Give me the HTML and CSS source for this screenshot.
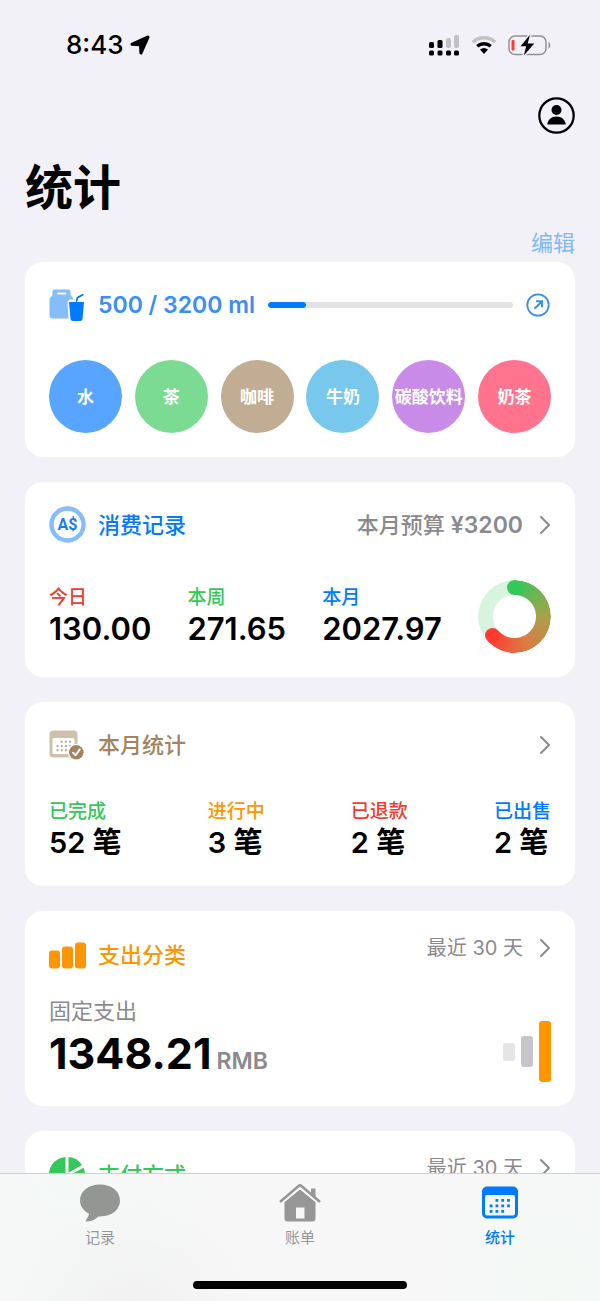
FILE: index.html
```html
<!DOCTYPE html>
<html lang="zh-CN">
<head>
<meta charset="utf-8">
<meta name="viewport" content="width=device-width, initial-scale=1">
<title>统计</title>
<link rel="stylesheet" href="styles.css">
</head>
<body>
<div class="app">
  <div class="screen">
    <div class="status-bar">
      <div class="status-time">
        <time>8:43</time>
        <svg width="20" height="20" viewBox="0 0 20 20" aria-hidden="true"><path d="M18 1.500 1.500 8.800 1.700 9.800 10 10.200 10.400 18.300 11.300 18.500 18.600 2.100Z" stroke="#000" stroke-width="2" stroke-linejoin="round"/></svg>
      </div>
      <div class="status-icons">
        <svg width="31" height="22" viewBox="0 0 31 22" aria-hidden="true">
          <g fill="#c1c1c5"><rect x="17" y="4" width="5" height="10" rx="2"/><rect x="25" y="1" width="5" height="13" rx="2"/></g>
          <rect x="0" y="8" width="5" height="6" rx="1.500"/><rect x="8.500" y="6" width="5" height="8" rx="1.500"/>
          <rect x="0" y="16.500" width="5" height="5" rx="1.500"/><rect x="8.500" y="16.500" width="5" height="5" rx="1.500"/><rect x="17" y="16.500" width="5" height="5" rx="1.500"/><rect x="25" y="16.500" width="5" height="5" rx="1.500"/>
        </svg>
        <svg width="26" height="20" viewBox="0 0 26 20" fill="none" aria-hidden="true">
          <path d="M1.800 7.200a16.500 16.500 0 0 1 22.400 0" stroke="#c1c1c5" stroke-width="3.600"/>
          <path d="M6.200 11.300a10.200 10.200 0 0 1 13.600 0" stroke="#000" stroke-width="3.400"/>
          <path d="M9 14.600a6.200 6.200 0 0 1 8 0l-4 4.300Z" fill="#000"/>
        </svg>
        <svg width="43" height="22" viewBox="0 0 43 22" aria-hidden="true">
          <rect x="1" y="2" width="37" height="18.500" rx="6" fill="none" stroke="#919195" stroke-width="1.500"/>
          <path d="M40.500 8v6.500c2.400-1.200 2.400-5.300 0-6.500Z" fill="#919195"/>
          <rect x="3.500" y="6" width="3" height="10.500" rx="1" fill="#ff3b30"/>
          <path d="M22 .8 12.500 12.300h5.700l-2.400 9.200L26.300 9.500h-6.600Z" fill="#000" stroke="#f2f1f8" stroke-width="3" paint-order="stroke" stroke-linejoin="round"/>
        </svg>
      </div>
    </div>

    <header class="page-head">
      <button class="icon-button profile" type="button" aria-label="账户">
        <svg width="37" height="37" viewBox="0 0 37 37" aria-hidden="true"><circle cx="18.500" cy="18.500" r="17.200" fill="none" stroke="#000" stroke-width="2.300"/><circle cx="18.500" cy="13" r="5"/><path d="M9.300 27.500c.3-4.700 4.200-8 9.200-8s8.900 3.300 9.200 8Z"/></svg>
      </button>
      <h1 class="page-title">统计</h1>
      <button class="edit" type="button">编辑</button>
    </header>

    <main class="cards">
      <section class="card">
        <div class="card-head">
          <span class="card-icon"><svg width="36" height="34" viewBox="0 0 36 34" aria-hidden="true">
            <path d="M5.500 1.500h14a2 2 0 0 1 2 2v3.500l3.500 4.500h-3.500a3 3 0 0 0-3 3.500L19.500 30.500H3.500a3 3 0 0 1-3-3v-16c0-2.500 3-3 3-5V3.500a2 2 0 0 1 2-2Z" fill="#85bcfa"/>
            <path d="M9 5.500h7.500" stroke="#fff" stroke-width="2" stroke-linecap="round"/>
            <path d="M20 14h15l-1.500 17a2.500 2.500 0 0 1-2.500 2H24a2.500 2.500 0 0 1-2.500-2Z" fill="#007aff"/>
            <path d="m27.500 13 1-3.300 5.200-2.900" fill="none" stroke="#007aff" stroke-width="1.800" stroke-linecap="round"/>
          </svg></span>
          <label class="intake" for="water">500 / 3200 ml</label>
          <progress class="meter" id="water" max="3200" value="500"></progress>
          <button class="icon-button" type="button" aria-label="打开">
            <svg width="26" height="26" viewBox="0 0 26 26" fill="none" stroke="#3a8df5" stroke-width="1.800" aria-hidden="true"><circle cx="13" cy="13" r="10.700"/><path d="m9.500 16.800 7.300-7.300M11 9.200h6v6" stroke-width="2"/></svg>
          </button>
        </div>
        <div class="drinks">
          <button class="drink water" type="button">水</button>
          <button class="drink tea" type="button">茶</button>
          <button class="drink coffee" type="button">咖啡</button>
          <button class="drink milk" type="button">牛奶</button>
          <button class="drink soda" type="button">碳酸饮料</button>
          <button class="drink milk-tea" type="button">奶茶</button>
        </div>
      </section>

      <section class="card">
        <div class="card-head">
          <span class="card-icon"><svg width="37" height="37" viewBox="0 0 37 37" aria-hidden="true"><circle cx="18.500" cy="18.500" r="16" fill="none" stroke="#85bcfa" stroke-width="4.400"/><text class="coin-text" x="18.500" y="24" text-anchor="middle">A$</text></svg></span>
          <h2 class="card-title blue">消费记录</h2>
          <a class="more strong" href="#spending"><span>本月预算 <b class="budget">¥3200</b></span>
            <svg class="chevron" width="12" height="20" viewBox="0 0 12 20" aria-hidden="true"><path d="m2 2 8 8-8 8"/></svg>
          </a>
        </div>
        <div class="stats">
          <dl class="stat"><dt class="red">今日</dt><dd>130.00</dd></dl>
          <dl class="stat"><dt class="green">本周</dt><dd>271.65</dd></dl>
          <dl class="stat"><dt class="blue">本月</dt><dd>2027.97</dd></dl>
          <div class="donut" role="img" aria-label="预算使用 63%"></div>
        </div>
      </section>

      <section class="card">
        <div class="card-head">
          <span class="card-icon"><svg width="36" height="32" viewBox="0 0 36 32" aria-hidden="true">
            <path fill-rule="evenodd" d="M4.500 1.500h20a4 4 0 0 1 4 4v19a4 4 0 0 1-4 4h-20a4 4 0 0 1-4-4v-19a4 4 0 0 1 4-4ZM5 9a1.500 1.500 0 0 0-1.500 1.500v13A1.500 1.500 0 0 0 5 25h19a1.500 1.500 0 0 0 1.500-1.500v-13A1.500 1.500 0 0 0 24 9Z" fill="#d0c0ab"/>
            <path d="M11.500 12.700h11M7.500 17h15M7.500 21.300h11" stroke="#bda88d" stroke-width="2" stroke-dasharray="2 2.300"/>
            <circle cx="27.300" cy="23.300" r="8.500" fill="#fff"/><circle cx="27.300" cy="23.300" r="7.300" fill="#a2845e"/>
            <path d="m24 23.700 2.500 2.700 4.300-6" fill="none" stroke="#fff" stroke-width="1.900" stroke-linecap="round" stroke-linejoin="round"/>
          </svg></span>
          <h2 class="card-title brown">本月统计</h2>
          <a class="more" href="#month" aria-label="本月统计">
            <svg class="chevron" width="12" height="20" viewBox="0 0 12 20" aria-hidden="true"><path d="m2 2 8 8-8 8"/></svg>
          </a>
        </div>
        <div class="stats counts">
          <dl class="stat"><dt class="green">已完成</dt><dd>52 笔</dd></dl>
          <dl class="stat"><dt class="orange">进行中</dt><dd>3 笔</dd></dl>
          <dl class="stat"><dt class="red">已退款</dt><dd>2 笔</dd></dl>
          <dl class="stat"><dt class="blue">已出售</dt><dd>2 笔</dd></dl>
        </div>
      </section>

      <section class="card category">
        <div class="card-head">
          <span class="card-icon"><svg width="37" height="27" viewBox="0 0 37 27" fill="#ff9500" aria-hidden="true"><rect y="8.500" width="11" height="18" rx="3"/><rect x="13" y="4.500" width="11" height="22" rx="3"/><rect x="26" y=".5" width="11" height="26" rx="3"/></svg></span>
          <h2 class="card-title orange">支出分类</h2>
          <a class="more" href="#category">最近 30 天
            <svg class="chevron" width="12" height="20" viewBox="0 0 12 20" aria-hidden="true"><path d="m2 2 8 8-8 8"/></svg>
          </a>
        </div>
        <div class="category-body">
          <div>
            <p class="category-name">固定支出</p>
            <p class="amount">1348.21<span class="currency">RMB</span></p>
          </div>
          <div class="bars" aria-hidden="true">
            <span class="bar light" style="height: 18px"></span>
            <span class="bar mid" style="height: 31px"></span>
            <span class="bar full" style="height: 61px"></span>
          </div>
        </div>
      </section>

      <section class="card category">
        <div class="card-head">
          <span class="card-icon"><svg width="37" height="38" viewBox="0 0 37 38" fill="#34c759" aria-hidden="true"><path d="M16.500 1v18.500l9.500 15.500A18 18 0 1 1 16.500 1Z"/><path d="M19.500 1A18 18 0 0 1 33 9L19.500 16.700Z"/><path d="M34.500 11.700A18 18 0 0 1 28.500 33.500L20 19.500Z"/></svg></span>
          <h2 class="card-title green">支付方式</h2>
          <a class="more" href="#payment">最近 30 天
            <svg class="chevron" width="12" height="20" viewBox="0 0 12 20" aria-hidden="true"><path d="m2 2 8 8-8 8"/></svg>
          </a>
        </div>
      </section>
    </main>
  </div>

  <footer class="tab-bar">
    <nav class="tabs">
      <a class="tab" href="#records">
        <svg width="42" height="40" viewBox="0 0 42 40" aria-hidden="true"><path d="M21 1.500C9.700 1.500 1 8.200 1 17.500c0 5.700 3.600 10.500 9 13.200-.2 2.200-1.500 4.200-2.700 5.700-1 1.200-.3 2.200 1.200 2.100 4.800-.3 8.200-2.600 11-5.100C32.300 34 41 27 41 17.500 41 8.200 32.300 1.500 21 1.500Z" fill="#939693"/></svg>
        记录
      </a>
      <a class="tab" href="#bills">
        <svg width="42" height="40" viewBox="0 0 42 40" fill="#969696" aria-hidden="true"><path d="M21 6.500 36.500 19v16.500a3 3 0 0 1-3 3h-25a3 3 0 0 1-3-3V19Z"/><path d="M17 24.500h8.500v11H17Z" fill="#f7f7f7"/><path d="M1.500 18.500 19.400 3.200a2.500 2.500 0 0 1 3.200 0l17.900 15.300" fill="none" stroke="#f7f7f7" stroke-width="6"/><path d="M32 5.500h4.500v11L32 12.500Z"/><path d="M1.800 18.200 19.300 3.200a2.600 2.600 0 0 1 3.400 0l17.500 15" fill="none" stroke="#969696" stroke-width="2.600" stroke-linecap="round"/></svg>
        账单
      </a>
      <a class="tab active" href="#stats" aria-current="page">
        <svg width="42" height="40" viewBox="0 0 42 40" aria-hidden="true"><path fill-rule="evenodd" d="M8 3.500h26a5 5 0 0 1 5 5v22a5 5 0 0 1-5 5H8a5 5 0 0 1-5-5v-22a5 5 0 0 1 5-5ZM8 12a2 2 0 0 0-2 2v16.500a2 2 0 0 0 2 2h26a2 2 0 0 0 2-2V14a2 2 0 0 0-2-2Z" fill="#007aff"/><path d="M16.500 17.300h15M10.700 22.800h20.800M10.700 28.300h15" stroke="#007aff" stroke-width="2.800" stroke-dasharray="2.800 3"/></svg>
        统计
      </a>
    </nav>
    <div class="home-indicator"></div>
  </footer>
</div>
</body>
</html>
```
FILE: styles.css
```css
* {
  box-sizing: border-box;
}

body {
  margin: 0;
  background: #f2f1f8;
  color: #000;
  font-family: Inter, "Noto Sans CJK SC", sans-serif;
}

h1,
h2,
p,
dl,
dd {
  margin: 0;
}

button {
  padding: 0;
  border: 0;
  background: none;
  font: inherit;
}

a {
  text-decoration: none;
}

svg {
  display: block;
  flex: none;
}

.app {
  display: flex;
  flex-direction: column;
  height: 100vh;
}

.screen {
  flex: 1;
  min-height: 0;
  overflow-y: auto;
  scrollbar-width: none;
}

/* Status bar */
.status-bar {
  display: flex;
  justify-content: space-between;
  align-items: center;
  height: 90px;
  padding: 0 49px 0 66px;
}

.status-time,
.status-icons {
  display: flex;
  align-items: center;
}

.status-time {
  gap: 6px;
  font-size: 26px;
  font-weight: 500;
  line-height: 32px;
}

.status-icons {
  gap: 11px;
}

/* Page heading */
.page-head {
  display: flex;
  flex-direction: column;
  padding: 7px 25px 5px;
}

.profile,
.edit {
  align-self: flex-end;
}

.page-title {
  margin: 18px 0 5px;
  font-size: 48px;
  font-weight: 700;
  line-height: 72px;
}

.edit {
  color: #7fb8f6;
  font-size: 22px;
  line-height: 28px;
}

.icon-button {
  display: block;
}

/* Cards */
.cards {
  display: flex;
  flex-direction: column;
  gap: 25px;
  padding: 0 25px 25px;
}

.card {
  display: flex;
  flex-direction: column;
  gap: 37px;
  padding: 24px;
  border-radius: 18px;
  background: #fff;
}

.card-head {
  display: flex;
  align-items: center;
  height: 37px;
}

.card-icon {
  flex: none;
  width: 49px;
}

.card-title {
  font-size: 22px;
  font-weight: 500;
  line-height: 32px;
}

.blue { color: #007aff; }
.red { color: #f23b31; }
.green { color: #34c759; }
.orange { color: #ff9500; }
.brown { color: #a2845e; }

.intake {
  color: #3a8df5;
  font-size: 23px;
  font-weight: 600;
  line-height: 32px;
}

.meter {
  flex: 1;
  min-width: 0;
  height: 6px;
  margin: 0 12px 0 13px;
  border: 0;
  border-radius: 3px;
  overflow: hidden;
  appearance: none;
  background: #e3e3e6;
}

.meter::-webkit-progress-bar {
  background: #e3e3e6;
}

.meter::-webkit-progress-value {
  border-radius: 3px;
  background: #007aff;
}

.more {
  display: flex;
  align-items: center;
  gap: 16px;
  margin-left: auto;
  color: #8a8a8e;
  font-size: 20px;
  line-height: 26px;
}

.more.strong {
  font-size: 22px;
  font-weight: 500;
}

.budget {
  font-size: 23px;
  font-weight: 600;
}

.chevron {
  fill: none;
  stroke: #8a8a8e;
  stroke-width: 2;
  stroke-linecap: round;
  stroke-linejoin: round;
}

.coin-text {
  fill: #1a7cf0;
  font-family: Roboto, sans-serif;
  font-size: 16px;
  font-weight: 700;
}

/* Drinks */
.drinks {
  display: flex;
  justify-content: space-between;
}

.drink {
  width: 73px;
  height: 73px;
  border-radius: 50%;
  color: #fff;
  font-size: 17px;
  font-weight: 700;
  line-height: 24px;
  white-space: nowrap;
}

.water { background: #57a5ff; }
.tea { background: #7bdb93; }
.coffee { background: #c0ad94; }
.milk { background: #77c8ec; }
.soda { background: #c88ce8; }
.milk-tea { background: #ff738e; }

/* Figures */
.stats {
  display: flex;
  justify-content: space-between;
  align-items: center;
}

.stat dt {
  font-size: 19px;
  font-weight: 500;
  line-height: 24px;
}

.stat dd {
  font-size: 31px;
  font-weight: 600;
  line-height: 38px;
}

.counts dd {
  font-size: 29px;
}

.donut {
  position: relative;
  width: 73px;
  height: 73px;
  border-radius: 50%;
  background: conic-gradient(#34c759, #a8a04c 90deg, #dc7a42 160deg, #ff3b30 228deg, #d6f4de 228deg);
  mask: radial-gradient(circle, transparent 21px, #000 22px);
}

.donut::before,
.donut::after {
  content: "";
  position: absolute;
  width: 15px;
  height: 15px;
  border-radius: 50%;
}

.donut::before {
  top: 0;
  left: 29px;
  background: #34c759;
}

.donut::after {
  top: 48px;
  left: 7px;
  background: #ff3b30;
}

/* Category cards */
.category {
  gap: 22px;
}

.category .card-head {
  height: 40px;
}

.category .more {
  align-self: flex-start;
}

.category-body {
  display: flex;
  justify-content: space-between;
  align-items: flex-end;
}

.category-name {
  color: #8a8a8e;
  font-size: 22px;
  line-height: 28px;
}

.amount {
  display: flex;
  align-items: baseline;
  gap: 5px;
  font-size: 43px;
  font-weight: 700;
  line-height: 57px;
}

.currency {
  color: #8a8a8e;
  font-size: 23px;
  font-weight: 600;
  line-height: 28px;
}

.bars {
  display: flex;
  align-items: center;
  gap: 6px;
}

.bar {
  width: 12px;
  border-radius: 3px;
}

.light { background: #e5e5e8; }
.mid { background: #c5c5ca; }
.full { background: #ff9500; }

/* Tab bar */
.tab-bar {
  display: flex;
  flex-direction: column;
  justify-content: space-between;
  height: 128px;
  padding: 9px 0 12px;
  border-top: 1px solid #d0d0d3;
  background:
    radial-gradient(circle at 22% 115%, #f0f0f0, transparent 25%),
    radial-gradient(circle at 12% 0, #f4f9f6, transparent 25%),
    radial-gradient(circle at 92% 80%, #f3f9f5, transparent 20%),
    #f7f7f8;
}

.tabs {
  display: flex;
}

.tab {
  display: flex;
  flex: 1;
  flex-direction: column;
  align-items: center;
  gap: 5px;
  color: #969698;
  font-size: 15px;
  line-height: 20px;
}

.active {
  color: #007aff;
  font-weight: 500;
}

.home-indicator {
  align-self: center;
  width: 214px;
  height: 8px;
  border-radius: 4px;
  background: #000;
}
```
